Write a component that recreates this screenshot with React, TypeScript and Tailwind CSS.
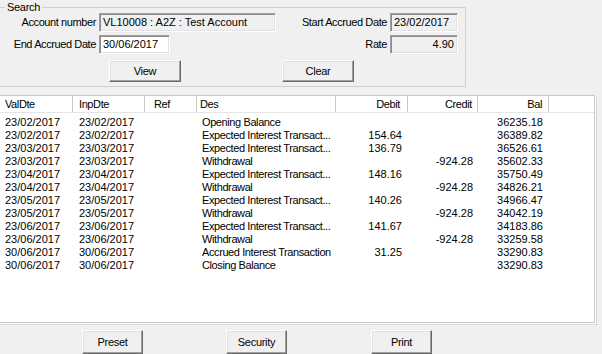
const rows = [
  ["23/02/2017", "23/02/2017", "", "Opening Balance", "", "", "36235.18"],
  ["23/02/2017", "23/02/2017", "", "Expected Interest Transact...", "154.64", "", "36389.82"],
  ["23/03/2017", "23/03/2017", "", "Expected Interest Transact...", "136.79", "", "36526.61"],
  ["23/03/2017", "23/03/2017", "", "Withdrawal", "", "-924.28", "35602.33"],
  ["23/04/2017", "23/04/2017", "", "Expected Interest Transact...", "148.16", "", "35750.49"],
  ["23/04/2017", "23/04/2017", "", "Withdrawal", "", "-924.28", "34826.21"],
  ["23/05/2017", "23/05/2017", "", "Expected Interest Transact...", "140.26", "", "34966.47"],
  ["23/05/2017", "23/05/2017", "", "Withdrawal", "", "-924.28", "34042.19"],
  ["23/06/2017", "23/06/2017", "", "Expected Interest Transact...", "141.67", "", "34183.86"],
  ["23/06/2017", "23/06/2017", "", "Withdrawal", "", "-924.28", "33259.58"],
  ["30/06/2017", "30/06/2017", "", "Accrued Interest Transaction", "31.25", "", "33290.83"],
  ["30/06/2017", "30/06/2017", "", "Closing Balance", "", "", "33290.83"],
];

const cols = "grid grid-cols-[74px_72px_52px_139px_72px_70px_71px_1fr]";

function Box({ value, width, readOnly, right }: { value: string; width: string; readOnly?: boolean; right?: boolean }) {
  return (
    <div
      className={`${width} h-[19px] border border-[#a0a0a0] border-r-white border-b-white shadow-[inset_1px_1px_0_#8a8a8a,inset_-1px_-1px_0_#e3e3e3] px-[3px] leading-[17px] whitespace-nowrap overflow-hidden ${
        readOnly ? "bg-[#f0f0f0]" : "bg-white"
      } ${right ? "text-right" : ""}`}
    >
      {value}
    </div>
  );
}

function Btn({ label, width, h = "h-[22px]" }: { label: string; width: string; h?: string }) {
  return (
    <button className={`${width} ${h} shrink-0 bg-[#f0f0f0] border border-white border-r-[#696969] border-b-[#696969] shadow-[inset_-1px_-1px_0_#a0a0a0,inset_1px_1px_0_#e3e3e3] tracking-[-0.3px] text-center`}>
      {label}
    </button>
  );
}

export default function App() {
  return (
    <div className="w-[602px] h-[354px] overflow-hidden bg-[#f0f0f0] text-black text-[11px] font-['Liberation_Sans',Arial,sans-serif] flex flex-col">
      <fieldset className="-ml-[2px] w-[468px] h-[88px] border border-[#d0d0d0]">
        <legend className="ml-[6px] px-[2px] leading-[14px] tracking-[-0.3px]">Search</legend>
        <div className="-mt-[1px] flex flex-col">
          <div className="flex items-center h-[19px]">
            <div className="w-[100px] text-right pr-[3px] tracking-[-0.4px]">Account number</div>
            <Box value="VL10008 : A2Z : Test Account" width="w-[177px]" readOnly />
            <div className="w-[114px] text-right pr-[3px] tracking-[-0.4px]">Start Accrued Date</div>
            <Box value="23/02/2017" width="w-[68px]" readOnly />
          </div>
          <div className="flex items-center h-[19px] mt-[3px]">
            <div className="w-[100px] text-right pr-[3px] tracking-[-0.4px]">End Accrued Date</div>
            <Box value="30/06/2017" width="w-[71px]" />
            <div className="w-[220px] text-right pr-[3px] tracking-[-0.4px]">Rate</div>
            <Box value="4.90" width="w-[68px]" readOnly right />
          </div>
          <div className="flex mt-[6px]">
            <div className="ml-[110px]">
              <Btn label="View" width="w-[72px]" />
            </div>
            <div className="ml-[101px]">
              <Btn label="Clear" width="w-[72px]" />
            </div>
          </div>
        </div>
      </fieldset>

      <div className="-ml-[2px] mt-[8px] w-[597px] h-[228px] shrink-0 bg-white border border-[#c8c8c8] shadow-[1px_1px_0_#ffffff,2px_2px_0_#d8d8d8] overflow-hidden">
        <div className={`${cols} h-[17px] leading-[16px] border-b border-[#e5e5e5]`}>
          <div className="border-r border-[#c8c8c8] pl-[6px] tracking-[-0.4px]">ValDte</div>
          <div className="border-r border-[#c8c8c8] pl-[6px] tracking-[-0.4px]">InpDte</div>
          <div className="border-r border-[#c8c8c8] pl-[9px] tracking-[-0.4px]">Ref</div>
          <div className="border-r border-[#c8c8c8] pl-[3px] tracking-[-0.4px]">Des</div>
          <div className="border-r border-[#c8c8c8] pr-[7px] text-right tracking-[-0.4px]">Debit</div>
          <div className="border-r border-[#c8c8c8] pr-[5px] text-right tracking-[-0.4px]">Credit</div>
          <div className="border-r border-[#c8c8c8] pr-[6px] text-right tracking-[-0.4px]">Bal</div>
          <div />
        </div>
        <div className="pt-[3px]">
          {rows.map((r, i) => (
            <div key={i} className={`${cols} h-[13px] leading-[13px]`}>
              <div className="pl-[6px]">{r[0]}</div>
              <div className="pl-[6px]">{r[1]}</div>
              <div className="pl-[6px]">{r[2]}</div>
              <div className="pl-[5px] whitespace-nowrap overflow-hidden tracking-[-0.4px]">{r[3]}</div>
              <div className="pr-[6px] text-right">{r[4]}</div>
              <div className="pr-[5px] text-right">{r[5]}</div>
              <div className="pr-[6px] text-right">{r[6]}</div>
              <div />
            </div>
          ))}
        </div>
      </div>

      <div className="flex mt-[7px]">
        <div className="ml-[82px]">
          <Btn label="Preset" width="w-[61px]" h="h-[24px]" />
        </div>
        <div className="ml-[83px]">
          <Btn label="Security" width="w-[61px]" h="h-[24px]" />
        </div>
        <div className="ml-[84px]">
          <Btn label="Print" width="w-[61px]" h="h-[24px]" />
        </div>
      </div>
    </div>
  );
}
